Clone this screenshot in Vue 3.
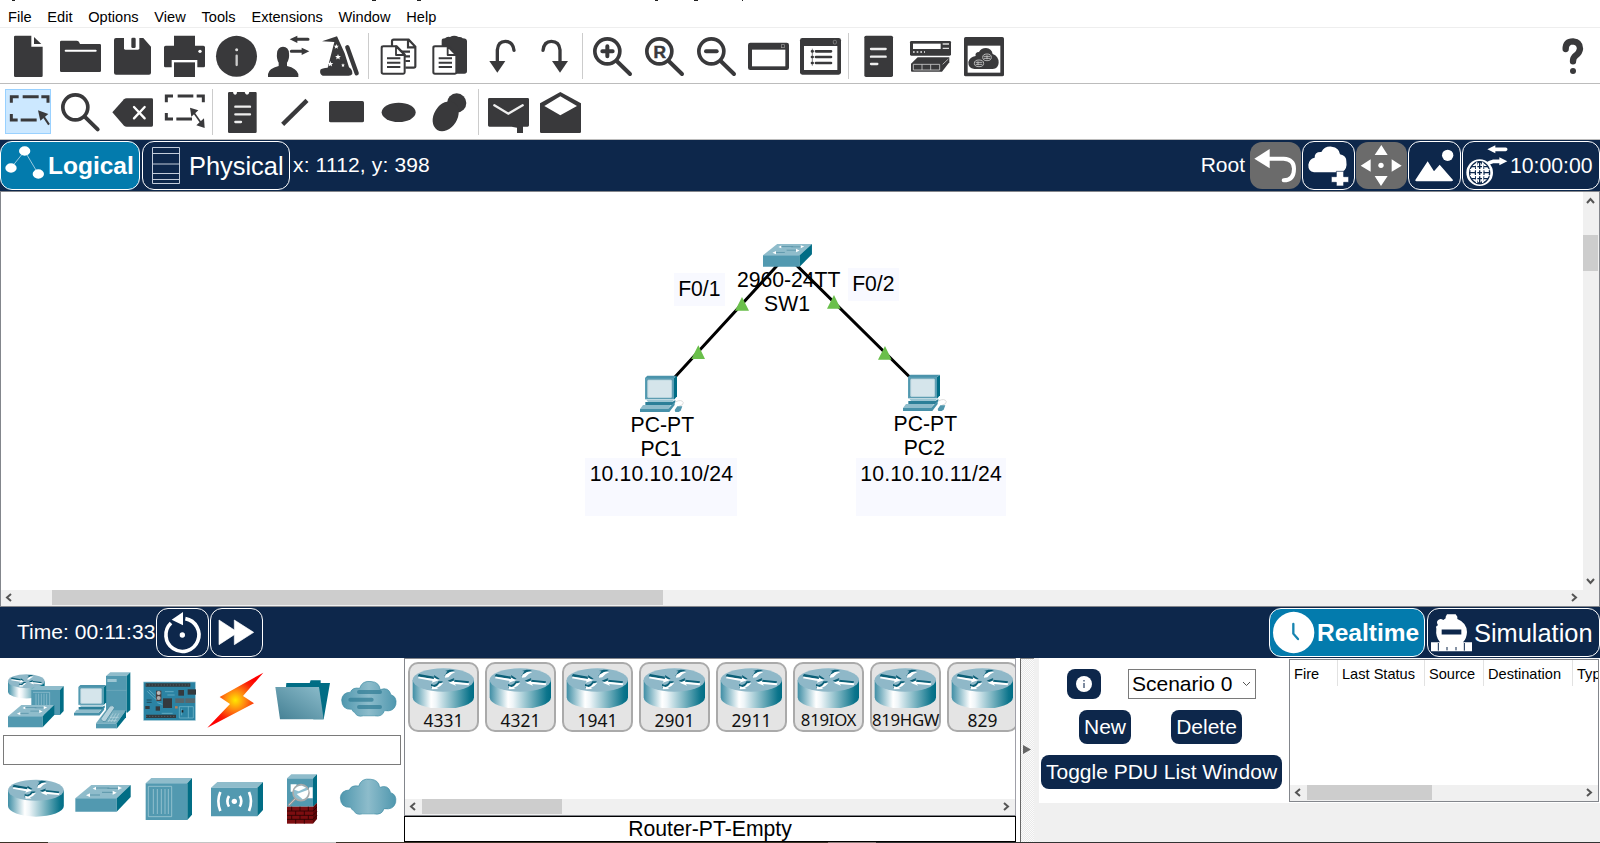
<script setup>
const menus = ['File', 'Edit', 'Options', 'View', 'Tools', 'Extensions', 'Window', 'Help']

const D = '#39393b'
const star = (x, y, r) => {
  let p = ''
  for (let i = 0; i < 10; i++) {
    const a = -Math.PI / 2 + (i * Math.PI) / 5
    const q = i % 2 ? r * 0.45 : r
    p += `${i ? 'L' : 'M'}${(x + q * Math.cos(a)).toFixed(1)} ${(y + q * Math.sin(a)).toFixed(1)}`
  }
  return `<path fill="#fff" d="${p}Z"/>`
}
const sheet = x => `<path d="M${x} 139h40l24 24v54q0 4-4 4h-60q-5 0-5-4v-74q0-4 5-4z" fill="#fff" stroke="${D}" stroke-width="6"/><path d="M${x + 38} 139v26h26z" fill="#fff" stroke="${D}" stroke-width="5.5" stroke-linejoin="round"/><path d="M${x + 11} 175h40M${x + 11} 188h40M${x + 11} 201h40" stroke="${D}" stroke-width="6"/>`
const lens = x => `<circle cx="${x}" cy="154" r="37.5" fill="none" stroke="${D}" stroke-width="11"/><path d="M${x + 28} 183L${x + 68} 222" stroke="${D}" stroke-width="12" stroke-linecap="round"/>`

// Icon artwork is drawn on a grid of three units per pixel; `x` is the left edge of its cell.
const mainBar = [
  [
    { x: 6, d: `<path d="M46 107H94V140H128V227Q128 231 124 231H46Q42 231 42 227V111Q42 107 46 107Z"/><path d="M102 111L124 132H102Z"/>` },
    { x: 162, d: `<path d="M184 122H230Q237 122 240 132H299Q303 132 303 136V212Q303 216 299 216H184Q180 216 180 212V126Q180 122 184 122Z"/><path d="M197 152H287" stroke="#fff" stroke-width="6" stroke-linecap="round"/>` },
    { x: 318, d: `<path d="M348 114H430L453 140V218Q453 224 447 224H348Q342 224 342 218V120Q342 114 348 114Z"/><path fill="#fff" d="M372 112H418V145Q418 149 414 149H376Q372 149 372 145Z"/><rect x="394" y="113" width="13" height="31" rx="4"/>` },
    { x: 474, d: `<path d="M522 107H585V137H610Q615 137 615 142V198Q615 202 611 202H592V180H515V202H496Q492 202 492 198V142Q492 137 497 137H522Z"/><path d="M522 187H585V231H522Z"/><circle cx="600" cy="154" r="5" fill="#fff"/>` },
    { x: 630, d: `<circle cx="709.5" cy="169" r="61.5"/><circle cx="710" cy="149" r="4.5" fill="#ddd"/><path d="M710 167V195" stroke="#ccc" stroke-width="7" stroke-linecap="round"/>` },
    { x: 786, d: `<path d="M804 231V222Q806 206 836 198V188Q829 177 831 160Q833 140 849 140Q866 140 867 160Q869 177 861 188V198Q890 205 895 222V231Z"/><path d="M885 118H924M874 154H910" stroke="${D}" stroke-width="9" stroke-linecap="round"/><path d="M869 118L892 107V129ZM928 154L905 143V165Z"/>` },
    { x: 942, d: `<path d="M966 124L1011 109L1034 160L1047 202Q1058 208 1057 222Q1054 227 1046 227H968Q958 222 961 209Q966 204 983 203L1003 126Z"/><path d="M1042 142L1070 220" stroke="${D}" stroke-width="13" stroke-linecap="round"/>${star(1009, 140, 8)}${star(1014, 171, 9)}${star(991, 192, 9)}${star(1029, 196, 6)}` },
  ],
  [
    { x: 1116, d: `<path d="M1176 140V124Q1176 119 1181 119H1226L1246 140V199Q1246 203 1241 203H1216M1224 119V142H1246M1206 155H1230M1214 169H1230M1216 183H1230" fill="none" stroke="${D}" stroke-width="6.5"/>${sheet(1150)}` },
    { x: 1272, d: `<path d="M1325 122Q1325 115 1335 115Q1340 109 1350 111Q1362 103 1376 111Q1384 110 1388 115Q1401 115 1401 124V214Q1401 221 1393 221H1325Z"/>${sheet(1305)}` },
    { x: 1428, o: 1440, d: `<path d="M52 188V150Q54 124 76 124Q99 124 102 151" fill="none" stroke="${D}" stroke-width="10" stroke-linecap="round"/><path d="M28 183H76L52 218Z"/>` },
    { x: 1584, o: 1440, d: `<path d="M240 188V150Q238 124 214 124Q192 124 189 151" fill="none" stroke="${D}" stroke-width="10" stroke-linecap="round"/><path d="M216 183H264L240 218Z"/>` },
  ],
  [
    { x: 1758, o: 1440, d: `${lens(382)}<path d="M367 154H398M382 139V169" stroke="${D}" stroke-width="12" stroke-linecap="round"/>` },
    { x: 1914, o: 1440, d: `${lens(538)}<text x="539" y="173" text-anchor="middle" font-family="Liberation Sans" font-weight="700" font-size="52" stroke="${D}" stroke-width="1.5">R</text>` },
    { x: 2070, o: 1440, d: `${lens(694)}<path d="M678 154H710" stroke="${D}" stroke-width="12" stroke-linecap="round"/>` },
    { x: 2226, o: 1440, d: `<rect x="804" y="128" width="123" height="82" rx="7"/><rect x="816" y="149" width="100" height="50" fill="#fff"/><rect x="904" y="134" width="9" height="9" fill="none" stroke="#999" stroke-width="2"/>` },
    { x: 2382, o: 1440, d: `<rect x="960" y="114" width="123" height="110" rx="7"/><rect x="972" y="138" width="100" height="72" fill="#fff"/><rect x="1060" y="121" width="9" height="11" rx="3" fill="none" stroke="#999" stroke-width="2"/><path d="M1008 154H1053M1008 171H1053M1008 189H1053M996 154H998M996 171H998M996 189H998" stroke="${D}" stroke-width="8" stroke-linecap="round"/><path d="M997 146V197" stroke="${D}" stroke-width="2"/>` },
  ],
  [
    { x: 2556, o: 1440, d: `<rect x="1153" y="107" width="86" height="124" rx="5"/><path d="M1173 147H1217M1173 170H1217M1173 192H1192" stroke="#eee" stroke-width="7" stroke-linecap="round"/>` },
    { x: 2712, o: 1440, d: `<rect x="1290" y="123" width="123" height="44" rx="4"/><rect x="1299" y="131" width="83" height="16" fill="#fff"/><path d="M1388 132H1407M1388 145H1407" stroke="#ddd" stroke-width="4"/><path d="M1299 156h5m6 0h5m6 0h5m6 0h3" stroke="#eee" stroke-width="5"/><path d="M1293 191L1313 172H1408V187L1386 215H1296Q1293 215 1293 212Z"/><path d="M1300 193H1379V210H1300ZM1326 193V210M1352 193V210M1388 193L1405 177" fill="none" stroke="#ccc" stroke-width="2.5"/>` },
    { x: 2868, o: 1443, d: `<rect x="1449" y="111" width="120" height="118" rx="5"/><rect x="1460" y="137" width="98" height="81" fill="#fff"/><path d="M1480 207Q1461 205 1462 186Q1466 171 1484 168Q1481 157 1494 156Q1500 144 1515 144Q1532 146 1535 162Q1553 168 1553 188Q1552 206 1535 207Z"/><g fill="none" stroke="#ccc" stroke-width="2.5"><ellipse cx="1518" cy="172" rx="13" ry="10"/><ellipse cx="1494" cy="190" rx="14" ry="10"/><path d="M1508 169H1528M1508 175H1528M1518 166V178M1484 187H1504M1484 193H1504M1491 184V196"/></g>` },
  ],
]
const help = { x: 4641, o: 3540, d: `<path d="M1157 147Q1157 124 1179 124Q1200 126 1200 146Q1199 157 1188 166Q1179 173 1179 184" fill="none" stroke="${D}" stroke-width="19" stroke-linecap="round"/><circle cx="1179" cy="213" r="9"/>` }

const drawBar = [
  [
    { x: 6, d: `<rect x="16.5" y="268.5" width="135" height="132" fill="#cce8ff" stroke="#99d1ff" stroke-width="3"/><path d="M34 308V290H56M68 290H116M124 290H144V308M34 342V360H53M62 360H110" fill="none" stroke="${D}" stroke-width="9"/><path d="M114 331L145 342L121 362Z"/><path d="M131 350L147 374" stroke="${D}" stroke-width="6"/>` },
    { x: 162, d: `<circle cx="226" cy="322" r="37.5" fill="none" stroke="${D}" stroke-width="11"/><path d="M254 350L293 388" stroke="${D}" stroke-width="12" stroke-linecap="round"/>` },
    { x: 318, d: `<path d="M337 337L372 298Q375 295 380 295H455Q459 295 459 299V376Q459 380 455 380H380Q376 380 372 377Z"/><path d="M402 321L434 355M434 321L402 355" stroke="#fff" stroke-width="7" stroke-linecap="round"/>` },
    { x: 474, d: `<path d="M499 307V288H519M533 288H580M590 288H610V307M499 339V357H519M529 357H576" fill="none" stroke="${D}" stroke-width="9"/><path d="M578 333L607 374" stroke="${D}" stroke-width="5"/><path d="M570 323L595 331L574 350ZM614 384L612 355L589 376Z"/>` },
  ],
  [
    { x: 648, d: `<path d="M688 276H699Q700 285 706 284Q711 284 711 276H734Q736 284 741 284Q747 284 748 276H767Q770 276 770 280V395Q770 399 766 399H688Q684 399 684 395V280Q684 276 688 276Z"/><path d="M706 320H750M706 343H750M706 366H723" stroke="#eee" stroke-width="7" stroke-linecap="round"/>` },
    { x: 804, d: `<path d="M848 373L921 301" stroke="${D}" stroke-width="13"/>` },
    { x: 960, d: `<rect x="987" y="303" width="105" height="64" rx="5"/>` },
    { x: 1116, d: `<ellipse cx="1196" cy="337" rx="51" ry="29"/>` },
    { x: 1272, d: `<circle cx="1370" cy="309" r="29"/><ellipse cx="1337" cy="349" rx="35" ry="48" transform="rotate(32 1337 349)"/>` },
  ],
  [
    { x: 1446, o: 1440, d: `<path d="M28 294H143Q147 294 147 298V376Q147 380 143 380H129V399H111V383L95 380H28Q24 380 24 376V298Q24 294 28 294Z"/><path d="M43 316L85 341L128 316" fill="none" stroke="#eee" stroke-width="7" stroke-linecap="round"/>` },
    { x: 1602, o: 1440, d: `<path d="M180 310L241 276L303 310V395Q303 399 299 399H184Q180 399 180 395Z"/><path d="M193 318L241 289L291 318L241 346Z" fill="#fff"/>` },
  ],
]

const cloud = 'M34 101Q4 103 3 72Q5 49 30 48Q36 32 58 36Q66 11 93 15Q118 16 121 40Q147 30 154 56Q173 62 169 86Q163 110 134 105Q128 126 103 121H70Q50 126 43 111Q36 108 34 101Z'
const palette = [
  [
    { v: '6 0', d: `<use href="#router" transform="translate(24 42) scale(.598)"/><path d="M94 90L107 78H191L180 90Z" fill="#8fbccb"/><path d="M94 90H180V165H94Z" fill="#5299b0"/><path d="M180 90L191 78V153L180 165Z" fill="#016d85"/><path d="M99 97H149V160M108 101V145M116 101V145M124 101V145M132 101V145M140 101V145" fill="none" stroke="#9cc6d3" stroke-width="2"/><use href="#switch" transform="translate(24 135) scale(.837)"/>` },
    { v: '207 0', d: `<path d="M318 48L331 37H391L380 48Z" fill="#8fbccb"/><path d="M318 48H380V156H318Z" fill="#5299b0"/><path d="M380 48L391 37V150L380 160Z" fill="#016d85"/><path d="M322 57H350V66H322Z" fill="#9cc6d3"/><path d="M318 91H380" stroke="#76adc0" stroke-width="2"/><use href="#pc" transform="translate(222 75) scale(.87 .84)"/><path d="M288 190L317 151H378L350 190Z" fill="#77aebf"/><path d="M288 190H350V205H288Z" fill="#5299b0"/><path d="M350 190L378 151V172L350 206Z" fill="#016d85"/><path d="M324 186L339 160M333 186L348 160M342 186L357 160M324 182H350M330 172H356" stroke="#b9d6df" stroke-width="2"/><path d="M302 177L330 138Q338 134 344 143L317 184Q309 189 302 177Z" fill="#b4d2dc" stroke="#3d8299" stroke-width="2"/>` },
    { v: '408 0', d: `<rect x="431" y="66" width="155" height="115" fill="#2b83a3" stroke="#9bc6d4" stroke-width="2"/><path d="M437 75H571M438 169H528" stroke="#333a3e" stroke-width="10"/><path d="M437 75H571M438 169H528" stroke="#555e62" stroke-width="3" stroke-dasharray="4 5"/><g fill="#343a3e"><rect x="489" y="115" width="27" height="29"/><rect x="535" y="90" width="17" height="17"/><rect x="563" y="88" width="25" height="16"/><rect x="467" y="139" width="13" height="13"/><rect x="436" y="138" width="13" height="9"/></g><g fill="#57676d"><rect x="526" y="115" width="27" height="14"/><rect x="556" y="115" width="29" height="14"/></g><rect x="468" y="92" width="16" height="31" fill="#4c3e3e"/><circle cx="476" cy="99" r="6" fill="#bbb"/><circle cx="476" cy="114" r="6" fill="#aaa"/><path d="M442 94L471 121M447 90L466 108M487 133L472 128M538 140H580V174H538ZM545 146V166M565 139V174M485 160H518M495 95H521M502 105H524" fill="none" stroke="#7bbdd0" stroke-width="2"/><path d="M440 120H455M440 127H455" stroke="#1d4b5c" stroke-width="3"/><path d="M545 154H550" stroke="#222" stroke-width="7"/><path d="M525 142H533" stroke="#b98057" stroke-width="7"/>` },
    { v: '9 0', d: `<path d="M190 38L129 108L162 130L22 203L90 132L59 111Z" fill="url(#bolt)"/>` },
    { v: '210 0', d: `<path d="M258 80L259 69H329L332 61H362V69H390L371 178H340Z" fill="#016d85"/><path d="M226 81H357L371 178H240Z" fill="url(#folder)"/>` },
    { v: '411 0', d: `<path d="${cloud}" transform="translate(422 50) scale(.98 .97)" fill="url(#cloudfill)" stroke="#3d8ba3" stroke-width="2"/><path d="M477 96H540M451 119H515M477 141H540" stroke="#347f97" stroke-width="12" stroke-linecap="round" opacity=".75"/>` },
  ],
  [
    { v: '6 324', d: `<use href="#router" transform="translate(24 358) scale(.91)"/>` },
    { v: '207 324', d: `<use href="#switch" transform="translate(226 375)"/>` },
    { v: '408 324', d: `<path d="M437 370L454 354H576L562 370Z" fill="#8fbccb"/><path d="M437 370H562V480H437Z" fill="#5299b0"/><path d="M562 370L576 354V464L562 480Z" fill="#016d85"/><path d="M445 379H515V470H445ZM460 387V462M472 387V462M484 387V462M495 387V462M505 387V462" fill="none" stroke="#9cc6d3" stroke-width="2.5"/>` },
    { v: '9 324', d: `<path d="M33 383L52 366H189L172 383Z" fill="#8fbccb"/><path d="M33 383H172V469H33Z" fill="#5299b0"/><path d="M172 383L189 366V450L172 469Z" fill="#016d85"/><circle cx="103" cy="424" r="8" fill="#fff"/><path d="M87 408Q77 424 87 440M119 408Q129 424 119 440M61 396Q49 424 61 453M147 396Q159 424 147 453" fill="none" stroke="#fff" stroke-width="8"/>` },
    { v: '210 324', d: `<path d="M261 355L274 343H351L339 355Z" fill="#8fbccb"/><path d="M261 355H339V440H261Z" fill="#5299b0"/><path d="M339 355L351 343V428L339 440Z" fill="#016d85"/><path d="M261 440H339V491H261Z" fill="#7c0d10"/><path d="M339 440L351 428V477L339 491Z" fill="#5c0508"/><path d="M261 453H339L351 441M261 466H339L351 454M261 478H339L351 466M275 440V453M300 440V453M325 440V453M287 453V466M313 453V466M275 466V478M300 466V478M325 466V478M287 478V491M313 478V491" fill="none" stroke="#2c0203" stroke-width="2.5"/><path d="M272 373H290L285 395H272ZM328 382H338V415H320Z" fill="#fff"/><circle cx="303" cy="398" r="24" fill="#8fbfd0" stroke="#aaa" stroke-width="5"/><path d="M283 389Q292 376 306 377L318 383L296 394Z" fill="#fff"/><path d="M290 402L325 389V398Q322 413 308 418Z" fill="#fff"/><path d="M286 416L266 436" stroke="#9a9a9a" stroke-width="7"/><path d="M286 416L266 436" stroke="#ddd" stroke-width="2"/>` },
    { v: '411 324', d: `<path d="${cloud}" transform="translate(418 343) scale(1 .98)" fill="url(#cloudfill)" stroke="#3d8ba3" stroke-width="2"/>` },
  ],
]
const models = ['4331', '4321', '1941', '2901', '2911', '819IOX', '819HGW', '829']
const columns = ['Fire', 'Last Status', 'Source', 'Destination', 'Type']
</script>

<template>
  <div class="app">
    <svg class="defs" width="0" height="0">
      <defs>
        <linearGradient id="barrel"><stop offset="0" stop-color="#3f8ea5" /><stop offset=".3" stop-color="#fff" /><stop offset=".38" stop-color="#eef5f8" /><stop offset=".93" stop-color="#0c758c" /><stop offset="1" stop-color="#016d85" /></linearGradient>
        <linearGradient id="folder" x1="1" y1="0" x2="0" y2="1"><stop offset="0" stop-color="#8cbccb" /><stop offset="1" stop-color="#437f93" /></linearGradient>
        <linearGradient id="cloudfill"><stop offset="0" stop-color="#4f97ae" /><stop offset=".5" stop-color="#8dbccb" /><stop offset="1" stop-color="#4f97ae" /></linearGradient>
        <radialGradient id="bolt"><stop offset="0" stop-color="#ffe800" /><stop offset=".35" stop-color="#ff8a10" /><stop offset=".75" stop-color="#fa1e08" /><stop offset="1" stop-color="#f00" /></radialGradient>
        <symbol id="router" overflow="visible">
          <path d="M0 36V88A92 35 0 0 0 184 88V36Z" fill="url(#barrel)" />
          <ellipse cx="92" cy="36" rx="92" ry="35" fill="#8fb8c8" />
          <g fill="#0c6078" transform="translate(-1 -4)">
            <path d="M20 22L66 30L65 25L82 36L57 42L60 37L16 29Z" />
            <path d="M170 44L124 39L126 34L106 42L130 51L127 46L168 51Z" />
            <path d="M96 28L106 27Q112 14 120 14L128 10L112 9L98 13L105 14Z" />
            <path d="M92 44L78 44Q74 54 64 55L56 52L56 64L78 61L72 59Q84 54 92 44Z" />
          </g>
          <g fill="#fff">
            <path d="M18 26L64 33L63 28L79 37L57 44L60 39L16 31Z" />
            <path d="M170 46L124 41L126 37L108 44L130 53L127 48L168 52Z" />
            <path d="M97 29L107 28Q113 18 128 12L112 12L98 20Z" />
            <path d="M92 45L80 46Q76 55 66 57L56 54L58 64L78 63L72 60Q84 56 92 45Z" />
          </g>
        </symbol>
        <symbol id="switch" overflow="visible">
          <path d="M0 40L48 0H166L124 40Z" fill="#8fbccb" />
          <path d="M0 40H124V80H0Z" fill="#5299b0" />
          <path d="M124 40L166 0V36L124 80Z" fill="#016d85" />
          <path d="M60 9H102M96 10H136M42 30H74M80 22H120" stroke="#5b96aa" stroke-width="3" />
          <path d="M52 11L62 5V15ZM140 9L128 4V15ZM32 31L44 25V36ZM124 23L112 17V29Z" fill="#fff" />
        </symbol>
        <symbol id="pc" overflow="visible">
          <path d="M15 7L22 0H111L102 7Z" fill="#4b93ab" />
          <path d="M15 7H102V71H15Z" fill="#5a9fb5" />
          <path d="M102 7L111 1V62L102 72Z" fill="#016d85" />
          <rect x="21" y="11" width="76" height="57" rx="5" fill="#c3dbe3" stroke="#3b829a" stroke-width="1.5" />
          <rect x="25" y="15" width="68" height="49" rx="4" fill="#d5e5eb" />
          <path d="M19 72H102L97 79H24Z" fill="#9cc5d2" />
          <path d="M16 79H97L106 73V80L97 88H16Z" fill="#2c7f98" />
          <path d="M9 88H93L84 100H0Z" fill="#8fbccb" />
          <path d="M0 100H84L104 78V88L88 109H0Z" fill="#4791a9" />
        </symbol>
      </defs>
    </svg>

    <header class="menu">
      <svg class="title" width="800" height="1"><path d="M12 0h3M372 0h4M417 0h4M655 0h3M694 0h4M742 0h1" stroke="#222" stroke-width="2" /></svg>
      <span v-for="m in menus" :key="m">{{ m }}</span>
    </header>

    <div class="tools">
      <div v-for="(g, i) in mainBar" :key="i" class="group">
        <svg v-for="t in g" :key="t.x" width="52" height="55" :viewBox="`${t.x - (t.o || 0)} 84 156 165`" v-html="t.d" />
      </div>
      <svg class="help" width="52" height="55" :viewBox="`${help.x - help.o} 84 156 165`" v-html="help.d" />
    </div>
    <div class="tools">
      <div v-for="(g, i) in drawBar" :key="i" class="group">
        <svg v-for="t in g" :key="t.x" width="52" height="55" :viewBox="`${t.x - (t.o || 0)} 252 156 165`" v-html="t.d" />
      </div>
    </div>

    <div class="bar upper">
      <div class="btn logical active">
        <svg width="46" height="47" viewBox="3 426 138 141"><path d="M33 504L74 453L115 522" fill="none" stroke="#b9d9e8" stroke-width="2.5" /><g fill="#fff"><ellipse cx="74" cy="453" rx="17" ry="14" /><ellipse cx="33" cy="504" rx="17" ry="14" /><ellipse cx="115" cy="522" rx="17" ry="14" /></g></svg>
        <b>Logical</b>
      </div>
      <div class="btn physical">
        <svg width="45" height="47" viewBox="429 426 135 141"><path d="M457.500 442.500H538.500V550.500H457.500ZM457 460.500H540M457 492H540M457 520.500H540M457 538.500H540" fill="none" stroke="#c3cddb" stroke-width="3" /></svg>
        <span>Physical</span>
      </div>
      <p class="coords">x: 1112, y: 398</p>
      <p class="root">Root</p>
      <div class="btn gray">
        <svg width="51" height="47" viewBox="211 426 153 141"><path d="M224 476L270 447V505Z" fill="#fff" /><path d="M262 476H312Q343 478 343 506Q343 541 312 541" fill="none" stroke="#fff" stroke-width="12" stroke-linecap="round" /></svg>
      </div>
      <div class="btn sq">
        <svg width="51" height="47" viewBox="369 426 153 141"><path d="M402 517Q384 514 385 494Q388 476 404 473Q403 455 424 456Q434 438 455 440Q478 443 480 463Q500 468 499 484Q503 508 486 517Z" fill="#fff" /><path d="M469 514H491V530H506V547H491V558H469V547H454V530H469Z" fill="#fff" stroke="#0d274b" stroke-width="2" /></svg>
      </div>
      <div class="btn gray">
        <svg width="51" height="47" viewBox="529 426 153 141"><path d="M585 465L605 435L624 465ZM585 528H624L604 558ZM543 497L573 478V515ZM666 497L636 478V515Z" fill="#fff" /><circle cx="604" cy="496" r="8" fill="#fff" /></svg>
      </div>
      <div class="btn sq">
        <svg width="51" height="47" viewBox="687 426 153 141"><path d="M706 540L743 484L762 514L779 494L819 540Q819 544 814 544H710Q705 544 706 540Z" fill="#fff" /><circle cx="803" cy="466" r="17" fill="#fff" /></svg>
      </div>
      <div class="btn clock">
        <svg width="46" height="47" viewBox="849 426 138 141"><circle cx="899" cy="518" r="40" fill="#fff" /><g fill="none" stroke="#0d274b" stroke-width="4"><ellipse cx="899" cy="518" rx="30" ry="33" /><ellipse cx="899" cy="518" rx="13" ry="33" /><path d="M899 485V551M869 518H929M874 500H924M874 536H924" /></g><path d="M870 509H929M870 527H929M890 487V549M908 487V549" stroke="#fff" stroke-width="4" /><path d="M937 448H977M928 488L940 484H965" stroke="#fff" stroke-width="11" stroke-linecap="round" fill="none" /><path d="M922 448L946 436V460ZM982 484L958 472V496Z" fill="#fff" /></svg>
        <span>10:00:00</span>
      </div>
    </div>

    <main class="workspace">
      <div class="view">
        <svg width="1582" height="398" viewBox="1 192 1582 398">
          <g transform="translate(560 230) scale(.33333)" font-size="63.5" text-anchor="middle">
            <g fill="#f8f9ff"><path d="M342 129H495V228H342ZM864 114H1017V213H864ZM75 684H531V858H75ZM888 684H1338V858H888Z" /></g>
            <text x="686" y="171">2960-24TT</text>
            <text x="681" y="242">SW1</text>
            <path d="M655 103L345 441M707 103L1049 441" stroke="#000" stroke-width="9" />
            <path d="M525 242L546 201L567 242ZM394 387L415 346L435 387ZM801 236L822 195L842 236ZM954 389L975 348L995 389Z" fill="#6abf4b" />
            <use href="#switch" transform="translate(609 42) scale(.885 .85)" />
            <g v-for="p in [[240, 437], [1029, 434]]" :key="p[0]" :transform="`translate(${p[0]} ${p[1]})`">
              <use href="#pc" />
              <path d="M108 78Q125 70 130 81Q132 88 116 92" fill="none" stroke="#ccc" stroke-width="2" />
              <path d="M104 103L112 92H127L122 105L116 109H106Z" fill="#4f96ad" />
            </g>
            <text x="418" y="198">F0/1</text>
            <text x="940" y="183">F0/2</text>
            <text x="307" y="605">PC-PT</text>
            <text x="303" y="677">PC1</text>
            <text x="1096" y="602">PC-PT</text>
            <text x="1093" y="674">PC2</text>
            <text x="304" y="752" textLength="430">10.10.10.10/24</text>
            <text x="1113" y="752" textLength="424">10.10.10.11/24</text>
          </g>
        </svg>
        <div class="vscroll">
          <svg width="16" height="16"><path d="M4 11L7.500 7L11 11" class="chev" /></svg>
          <i></i>
          <svg width="16" height="16"><path d="M4 5L7.500 9L11 5" class="chev" /></svg>
        </div>
      </div>
      <div class="hscroll main-h">
        <svg width="16" height="15"><path d="M10 4L6 7.500L10 11" class="chev" /></svg>
        <i></i>
        <svg width="16" height="15"><path d="M6 4L10 7.500L6 11" class="chev" /></svg>
      </div>
    </main>

    <div class="bar lower">
      <p class="time">Time: 00:11:33</p>
      <div class="btn sq">
        <svg width="51" height="47" viewBox="471 117 153 141"><path d="M556 146A49.500 49.500 0 1 1 513 159" fill="none" stroke="#fff" stroke-width="11" /><path d="M515 149L549 126V166Z" fill="#fff" /><circle cx="547" cy="195" r="8" fill="#fff" /></svg>
      </div>
      <div class="btn sq ff">
        <svg width="51" height="47" viewBox="633 117 153 141"><path d="M657 150L703 180V150L761 187L703 224V194L657 224Z" fill="#fff" stroke="#fff" stroke-width="2" stroke-linejoin="round" /></svg>
      </div>
      <div class="btn realtime active">
        <svg width="46" height="47" viewBox="30 27 138 141"><circle cx="101" cy="97.500" r="62" fill="#fff" /><path d="M100 72V101L114 117" fill="none" stroke="#1784b0" stroke-width="7" stroke-linecap="round" /></svg>
        <b>Realtime</b>
      </div>
      <div class="btn simulation">
        <svg width="46" height="47" viewBox="504 27 138 141"><path d="M557 55V50L561 43H587L592 50V57Q620 68 621 96Q620 116 609 127H636V154H513V127H540Q526 110 529 86Q526 78 534 76Q527 64 536 59Q542 54 550 60Z" fill="#fff" /><path d="M545 96H604" stroke="#0d274b" stroke-width="15" /><path d="M535 129V152M613 129V152M561 141V151M588 141V151" stroke="#0d274b" stroke-width="3" /></svg>
        <span>Simulation</span>
      </div>
    </div>

    <footer class="bottom">
      <section class="palette">
        <div class="row r1"><svg v-for="t in palette[0]" :key="t.v" width="67" height="77" :viewBox="`${t.v} 201 231`" v-html="t.d" /></div>
        <div class="search"></div>
        <div class="row r2"><svg v-for="t in palette[1]" :key="t.v" width="67" height="62" :viewBox="`${t.v} 201 186`" v-html="t.d" /></div>
      </section>
      <section class="devices">
        <div class="shelf">
          <div class="tiles">
            <div v-for="m in models" :key="m" class="tile" :class="{ long: m.length > 4 }">
              <svg width="67" height="44" viewBox="-8 -12 201 132"><use href="#router" /></svg>
              <span>{{ m }}</span>
            </div>
          </div>
          <div class="hscroll shelf-h">
            <svg width="17" height="15"><path d="M10 4L6 7.500L10 11" class="chev" /></svg>
            <i></i>
            <svg width="17" height="15"><path d="M6 4L10 7.500L6 11" class="chev" /></svg>
          </div>
        </div>
        <div class="caption">Router-PT-Empty</div>
      </section>
      <div class="splitter"><svg width="8" height="9"><path d="M0 0L8 4.500L0 9Z" fill="#666" /></svg></div>
      <section class="pdu">
        <div class="pdu-top">
          <div class="scenario">
            <div class="line l1">
              <div class="nb info"><svg width="16" height="16"><circle cx="8" cy="8" r="8" fill="#fff" /><path d="M8 4V5.500M8 7V12" stroke="#7e8b9f" stroke-width="2" /></svg></div>
              <div class="select">Scenario 0<svg width="9" height="6"><path d="M1 1L4.500 4.500L8 1" fill="none" stroke="#555" /></svg></div>
            </div>
            <div class="line l2"><div class="nb new">New</div><div class="nb del">Delete</div></div>
            <div class="nb toggle">Toggle PDU List Window</div>
          </div>
          <div class="table">
            <div class="head"><span v-for="c in columns" :key="c" :class="c.slice(0, 4).toLowerCase()">{{ c }}</span></div>
            <div class="hscroll table-h">
              <svg width="17" height="15"><path d="M10 4L6 7.500L10 11" class="chev" /></svg>
              <i></i>
              <svg width="17" height="15"><path d="M6 4L10 7.500L6 11" class="chev" /></svg>
            </div>
          </div>
        </div>
      </section>
    </footer>
    <div class="edge"></div>
  </div>
</template>

<style>
body { margin: 0; overflow: hidden; }
</style>

<style scoped>
.app { width: 1600px; height: 843px; display: flex; flex-direction: column; background: #fff; color: #000; font-family: "Liberation Sans", Arial, sans-serif; font-size: 21px; overflow: hidden; }
.app * { box-sizing: border-box; }
svg { display: block; flex: none; }
p { margin: 0; }
.defs { position: absolute; }
.menu { position: relative; height: 28px; border-bottom: 1px solid #eee; display: flex; gap: 15.8px; padding: 7px 0 0 8px; font-size: 14.6px; line-height: 20px; }
.title { position: absolute; left: 0; top: 0; }
.tools { height: 56px; border-bottom: 1px solid #bcbcbc; display: flex; padding: 0 1px 0 2px; fill: #39393b; }
.group { display: flex; }
.group + .group { position: relative; padding-left: 6px; }
.group + .group::before { content: ""; position: absolute; left: 2px; top: 5px; width: 1px; height: 46px; background: #ccc; }
.help { margin-left: auto; }
.bar { background: #0d274b; color: #fff; display: flex; align-items: center; white-space: nowrap; line-height: 26px; }
.upper { height: 51px; }
.lower { height: 51px; }
.btn { display: flex; align-items: center; height: 49px; border: 1px solid #fff; border-radius: 12px; flex: none; overflow: hidden; }
.btn b, .btn span { position: relative; }
.btn b { font-size: 24.5px; margin-left: 1px; }
.btn span { font-size: 25.4px; }
.btn.active { background: #037bad; }
.logical { width: 140px; }
.physical { width: 148px; margin-left: 2px; }
.physical span { margin-left: 1px; }
.coords { margin: -2px 0 0 3px; letter-spacing: .15px; }
.root { margin: -1px 5px 0 auto; }
.gray { width: 51px; height: 47px; border: 0; background: #6b6b6b; }
.sq { width: 53px; margin: 0 1px; }
.clock { width: 138px; }
.btn.clock span { font-size: 21.2px; margin-left: 1px; }
.time { margin: -1px 0 0 17px; width: 138px; letter-spacing: .05px; }
.ff { margin-left: 0; }
.realtime { width: 156px; margin-left: auto; margin-right: 2px; }
.simulation { width: 173px; }
.workspace { height: 416px; border: 1px solid #83868c; }
.view { display: flex; height: 398px; }
.vscroll { width: 16px; background: #f0f0f0; display: flex; flex-direction: column; }
.vscroll i { width: 15px; height: 36px; margin: 27px 0 auto; background: #cdcdcd; }
.hscroll { height: 16px; background: #f0f0f0; display: flex; }
.hscroll i { height: 15px; background: #cdcdcd; }
.chev { fill: none; stroke: #555; stroke-width: 2; }
.main-h i { width: 611px; margin: 0 auto 0 35px; }
.main-h svg:last-child { margin-right: 17px; }
.bottom { height: 184px; display: flex; }
.palette { width: 404px; display: flex; flex-direction: column; }
.row { display: flex; padding-left: 2px; }
.r1 { padding-top: 2px; height: 77px; overflow: hidden; }
.r2 { margin-top: 3px; }
.search { width: 398px; height: 30px; margin-left: 3px; border: 1px solid #7a7a7a; flex: none; }
.devices { width: 612px; display: flex; flex-direction: column; }
.shelf { height: 158px; border: 1px solid #83868c; border-right-color: #a0a0a8; }
.tiles { height: 140px; padding: 3px 0 0 3px; display: flex; gap: 6px; overflow: hidden; }
.tile { width: 71px; height: 70px; flex: none; background: #e4e4e4; border: 2px solid #aaa; border-radius: 10px; text-align: center; font: 17.4px/20px "Noto Sans", sans-serif; white-space: nowrap; color: #111; }
.tile span { display: flex; justify-content: center; margin-top: 2px; }
.long { font-size: 16.8px; letter-spacing: -.3px; }
.shelf-h i { width: 140px; margin-right: auto; }
.caption { height: 26px; border: 1px solid #000; text-align: center; line-height: 23px; font-size: 21.2px; }
.splitter { width: 14px; margin-left: 4px; border-left: 1px solid #666; border-top: 1px solid #888; background: repeating-conic-gradient(#e9e9e9 0 25%, #fbfbfb 0 50%) 0 0 / 2px 2px; padding: 86px 0 0 2px; }
.pdu { flex: 1; background: #f0f0f0; padding-left: 5px; }
.pdu-top { height: 145px; background: #fff; display: flex; justify-content: space-between; padding: 1px 1px 0 2px; }
.scenario { width: 241px; padding-top: 10px; }
.line { display: flex; }
.nb { background: #0d274b; color: #fff; border-radius: 8px; height: 34px; line-height: 33px; text-align: center; white-space: nowrap; }
.l1 { padding-left: 26px; gap: 27px; }
.info { width: 34px; height: 30px; display: grid; place-items: center; }
.select { width: 128px; height: 30px; border: 1px solid #7a7a7a; display: flex; align-items: center; justify-content: space-between; padding: 0 4px 0 3px; line-height: 28px; }
.l2 { margin: 11px 0; padding-left: 38px; gap: 40px; }
.new { width: 52px; }
.del { width: 71px; }
.table { width: 310px; height: 143px; border: 1px solid #83868c; display: flex; flex-direction: column; justify-content: space-between; }
.head { display: flex; height: 26px; font-size: 14.6px; line-height: 28px; overflow: hidden; }
.head span { border-right: 1px solid #e2e2e2; padding-left: 4px; flex: none; white-space: nowrap; }
.fire { width: 48px; }
.last { width: 87px; }
.sour { width: 59px; }
.dest { width: 89px; }
.table-h i { width: 125px; margin-right: auto; }
.edge { height: 1px; background: linear-gradient(90deg, #3d3328 48px, #c4c4c4 48px 336px, #3d3328 336px 828px, #8a7a78 828px 876px, #333 876px); }
</style>
